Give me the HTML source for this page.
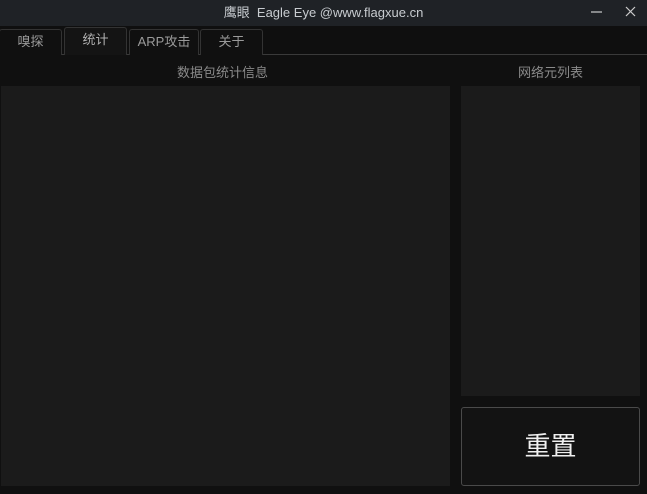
<!DOCTYPE html>
<html><head><meta charset="utf-8"><style>
*{margin:0;padding:0;box-sizing:border-box}
body{width:647px;height:494px;background:#101010;position:relative;overflow:hidden;font-family:"Liberation Sans","Noto Sans CJK SC",sans-serif}
.title{position:absolute;left:0;top:0;width:647px;height:26px;background:#1f2226;color:#c8ccd0;font-size:13px;text-align:center;line-height:26px}
.tabbar{position:absolute;left:0;top:26px;width:647px;height:29px;background:#0f0f0f;border-bottom:1px solid #3a3a3a}
.tab{position:absolute;top:3px;height:26px;border:1px solid #333;border-bottom:none;border-radius:3px 3px 0 0;background:#101010;color:#9a9a9a;font-size:13px;text-align:center;line-height:24px}
.sel{top:1px;height:28px;background:#141414;color:#b0b0b0}
.lbl{position:absolute;top:62px;color:#8a8a8a;font-size:13px;text-align:center}
.panel{position:absolute;background:#1b1b1b}
.btn{position:absolute;left:461px;top:407px;width:179px;height:79px;background:#131313;border:1px solid #4a4a4a;border-radius:3px;color:#f0f0f0;font-size:26px;text-align:center;line-height:77px}
</style></head><body>
<div class="title">鹰眼&nbsp; Eagle Eye @www.flagxue.cn</div>
<svg style="position:absolute;left:590px;top:6px" width="50" height="14"><line x1="1" y1="6" x2="12" y2="6" stroke="#ccc" stroke-width="1.2"/><line x1="36" y1="1" x2="45" y2="10" stroke="#ccc" stroke-width="1.2"/><line x1="45" y1="1" x2="36" y2="10" stroke="#ccc" stroke-width="1.2"/></svg>
<div class="tabbar">
<div class="tab" style="left:-1px;width:63px">嗅探</div>
<div class="tab sel" style="left:64px;width:63px">统计</div>
<div class="tab" style="left:129px;width:70px">ARP攻击</div>
<div class="tab" style="left:200px;width:63px">关于</div>
</div>
<div class="lbl" style="left:0;width:445px">数据包统计信息</div>
<div class="lbl" style="left:461px;width:179px">网络元列表</div>
<div class="panel" style="left:1px;top:86px;width:449px;height:400px"></div>
<div class="panel" style="left:461px;top:86px;width:179px;height:310px"></div>
<div class="btn">重置</div>
</body></html>
